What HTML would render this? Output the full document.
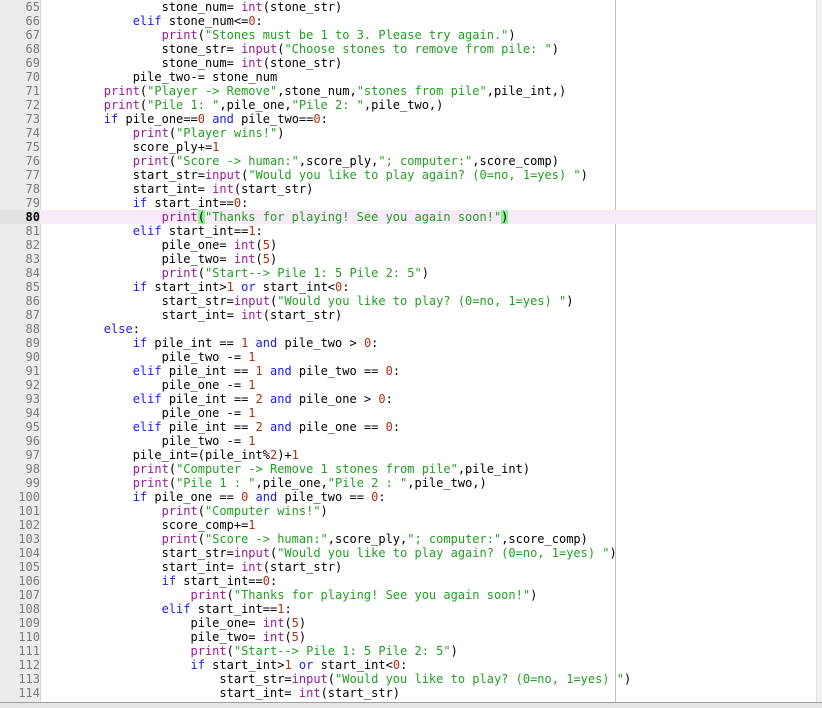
<!DOCTYPE html><html><head><style>
body{margin:0;width:822px;height:707px;overflow:hidden;background:#fff;font-family:"DejaVu Sans Mono","Liberation Mono",monospace;font-size:12px;position:relative}
#g{position:absolute;left:0;top:0;width:40px;height:702px;background:#ececec;border-right:1px solid #d4d4d4}
.l{position:absolute;left:0;height:14px;line-height:14px;width:816px;white-space:pre}
.n{display:inline-block;width:40px;text-align:right;color:#7a7a7a;padding-right:0}
.c{position:absolute;left:46px;top:0;color:#000}
.hl{background:#f7ebf7}
.hl .n{color:#000;font-weight:bold;background:#e2e2e2}
.k{color:#1c1cf0}.p{color:#9a1a9a}.s{color:#22a022}.d{color:#b03010}
.b{background:#8ef08e}
#v{position:absolute;left:615px;top:0;width:1px;height:702px;background:#c0c0c0}
#sb{position:absolute;left:816px;top:0;width:6px;height:702px;background:#f2f2f2;border-left:1px solid #e0e0e0}
#bt{position:absolute;left:0;top:702px;width:822px;height:5px;background:#e6e6e6;border-top:1px solid #a0a0a0}
</style></head><body>
<div id="g"></div><div id="v"></div><div id="sb"></div>
<div class="l" style="top:0"><span class="n">65</span><span class="c">                stone_num= <span class="p">int</span>(stone_str)</span></div>
<div class="l" style="top:14px"><span class="n">66</span><span class="c">            <span class="k">elif</span> stone_num&lt;=<span class="d">0</span>:</span></div>
<div class="l" style="top:28px"><span class="n">67</span><span class="c">                <span class="p">print</span>(<span class="s">"Stones must be 1 to 3. Please try again."</span>)</span></div>
<div class="l" style="top:42px"><span class="n">68</span><span class="c">                stone_str= <span class="p">input</span>(<span class="s">"Choose stones to remove from pile: "</span>)</span></div>
<div class="l" style="top:56px"><span class="n">69</span><span class="c">                stone_num= <span class="p">int</span>(stone_str)</span></div>
<div class="l" style="top:70px"><span class="n">70</span><span class="c">            pile_two-= stone_num</span></div>
<div class="l" style="top:84px"><span class="n">71</span><span class="c">        <span class="p">print</span>(<span class="s">"Player -&gt; Remove"</span>,stone_num,<span class="s">"stones from pile"</span>,pile_int,)</span></div>
<div class="l" style="top:98px"><span class="n">72</span><span class="c">        <span class="p">print</span>(<span class="s">"Pile 1: "</span>,pile_one,<span class="s">"Pile 2: "</span>,pile_two,)</span></div>
<div class="l" style="top:112px"><span class="n">73</span><span class="c">        <span class="k">if</span> pile_one==<span class="d">0</span> <span class="k">and</span> pile_two==<span class="d">0</span>:</span></div>
<div class="l" style="top:126px"><span class="n">74</span><span class="c">            <span class="p">print</span>(<span class="s">"Player wins!"</span>)</span></div>
<div class="l" style="top:140px"><span class="n">75</span><span class="c">            score_ply+=<span class="d">1</span></span></div>
<div class="l" style="top:154px"><span class="n">76</span><span class="c">            <span class="p">print</span>(<span class="s">"Score -&gt; human:"</span>,score_ply,<span class="s">"; computer:"</span>,score_comp)</span></div>
<div class="l" style="top:168px"><span class="n">77</span><span class="c">            start_str=<span class="p">input</span>(<span class="s">"Would you like to play again? (0=no, 1=yes) "</span>)</span></div>
<div class="l" style="top:182px"><span class="n">78</span><span class="c">            start_int= <span class="p">int</span>(start_str)</span></div>
<div class="l" style="top:196px"><span class="n">79</span><span class="c">            <span class="k">if</span> start_int==<span class="d">0</span>:</span></div>
<div class="l hl" style="top:210px"><span class="n">80</span><span class="c">                <span class="p">print</span><span class="b">(</span><span class="s">"Thanks for playing! See you again soon!"</span><span class="b">)</span></span></div>
<div class="l" style="top:224px"><span class="n">81</span><span class="c">            <span class="k">elif</span> start_int==<span class="d">1</span>:</span></div>
<div class="l" style="top:238px"><span class="n">82</span><span class="c">                pile_one= <span class="p">int</span>(<span class="d">5</span>)</span></div>
<div class="l" style="top:252px"><span class="n">83</span><span class="c">                pile_two= <span class="p">int</span>(<span class="d">5</span>)</span></div>
<div class="l" style="top:266px"><span class="n">84</span><span class="c">                <span class="p">print</span>(<span class="s">"Start--&gt; Pile 1: 5 Pile 2: 5"</span>)</span></div>
<div class="l" style="top:280px"><span class="n">85</span><span class="c">            <span class="k">if</span> start_int&gt;<span class="d">1</span> <span class="k">or</span> start_int&lt;<span class="d">0</span>:</span></div>
<div class="l" style="top:294px"><span class="n">86</span><span class="c">                start_str=<span class="p">input</span>(<span class="s">"Would you like to play? (0=no, 1=yes) "</span>)</span></div>
<div class="l" style="top:308px"><span class="n">87</span><span class="c">                start_int= <span class="p">int</span>(start_str)</span></div>
<div class="l" style="top:322px"><span class="n">88</span><span class="c">        <span class="k">else</span>:</span></div>
<div class="l" style="top:336px"><span class="n">89</span><span class="c">            <span class="k">if</span> pile_int == <span class="d">1</span> <span class="k">and</span> pile_two &gt; <span class="d">0</span>:</span></div>
<div class="l" style="top:350px"><span class="n">90</span><span class="c">                pile_two -= <span class="d">1</span></span></div>
<div class="l" style="top:364px"><span class="n">91</span><span class="c">            <span class="k">elif</span> pile_int == <span class="d">1</span> <span class="k">and</span> pile_two == <span class="d">0</span>:</span></div>
<div class="l" style="top:378px"><span class="n">92</span><span class="c">                pile_one -= <span class="d">1</span></span></div>
<div class="l" style="top:392px"><span class="n">93</span><span class="c">            <span class="k">elif</span> pile_int == <span class="d">2</span> <span class="k">and</span> pile_one &gt; <span class="d">0</span>:</span></div>
<div class="l" style="top:406px"><span class="n">94</span><span class="c">                pile_one -= <span class="d">1</span></span></div>
<div class="l" style="top:420px"><span class="n">95</span><span class="c">            <span class="k">elif</span> pile_int == <span class="d">2</span> <span class="k">and</span> pile_one == <span class="d">0</span>:</span></div>
<div class="l" style="top:434px"><span class="n">96</span><span class="c">                pile_two -= <span class="d">1</span></span></div>
<div class="l" style="top:448px"><span class="n">97</span><span class="c">            pile_int=(pile_int%<span class="d">2</span>)+<span class="d">1</span></span></div>
<div class="l" style="top:462px"><span class="n">98</span><span class="c">            <span class="p">print</span>(<span class="s">"Computer -&gt; Remove 1 stones from pile"</span>,pile_int)</span></div>
<div class="l" style="top:476px"><span class="n">99</span><span class="c">            <span class="p">print</span>(<span class="s">"Pile 1 : "</span>,pile_one,<span class="s">"Pile 2 : "</span>,pile_two,)</span></div>
<div class="l" style="top:490px"><span class="n">100</span><span class="c">            <span class="k">if</span> pile_one == <span class="d">0</span> <span class="k">and</span> pile_two == <span class="d">0</span>:</span></div>
<div class="l" style="top:504px"><span class="n">101</span><span class="c">                <span class="p">print</span>(<span class="s">"Computer wins!"</span>)</span></div>
<div class="l" style="top:518px"><span class="n">102</span><span class="c">                score_comp+=<span class="d">1</span></span></div>
<div class="l" style="top:532px"><span class="n">103</span><span class="c">                <span class="p">print</span>(<span class="s">"Score -&gt; human:"</span>,score_ply,<span class="s">"; computer:"</span>,score_comp)</span></div>
<div class="l" style="top:546px"><span class="n">104</span><span class="c">                start_str=<span class="p">input</span>(<span class="s">"Would you like to play again? (0=no, 1=yes) "</span>)</span></div>
<div class="l" style="top:560px"><span class="n">105</span><span class="c">                start_int= <span class="p">int</span>(start_str)</span></div>
<div class="l" style="top:574px"><span class="n">106</span><span class="c">                <span class="k">if</span> start_int==<span class="d">0</span>:</span></div>
<div class="l" style="top:588px"><span class="n">107</span><span class="c">                    <span class="p">print</span>(<span class="s">"Thanks for playing! See you again soon!"</span>)</span></div>
<div class="l" style="top:602px"><span class="n">108</span><span class="c">                <span class="k">elif</span> start_int==<span class="d">1</span>:</span></div>
<div class="l" style="top:616px"><span class="n">109</span><span class="c">                    pile_one= <span class="p">int</span>(<span class="d">5</span>)</span></div>
<div class="l" style="top:630px"><span class="n">110</span><span class="c">                    pile_two= <span class="p">int</span>(<span class="d">5</span>)</span></div>
<div class="l" style="top:644px"><span class="n">111</span><span class="c">                    <span class="p">print</span>(<span class="s">"Start--&gt; Pile 1: 5 Pile 2: 5"</span>)</span></div>
<div class="l" style="top:658px"><span class="n">112</span><span class="c">                    <span class="k">if</span> start_int&gt;<span class="d">1</span> <span class="k">or</span> start_int&lt;<span class="d">0</span>:</span></div>
<div class="l" style="top:672px"><span class="n">113</span><span class="c">                        start_str=<span class="p">input</span>(<span class="s">"Would you like to play? (0=no, 1=yes) "</span>)</span></div>
<div class="l" style="top:686px"><span class="n">114</span><span class="c">                        start_int= <span class="p">int</span>(start_str)</span></div>
<div id="bt"></div>
</body></html>
